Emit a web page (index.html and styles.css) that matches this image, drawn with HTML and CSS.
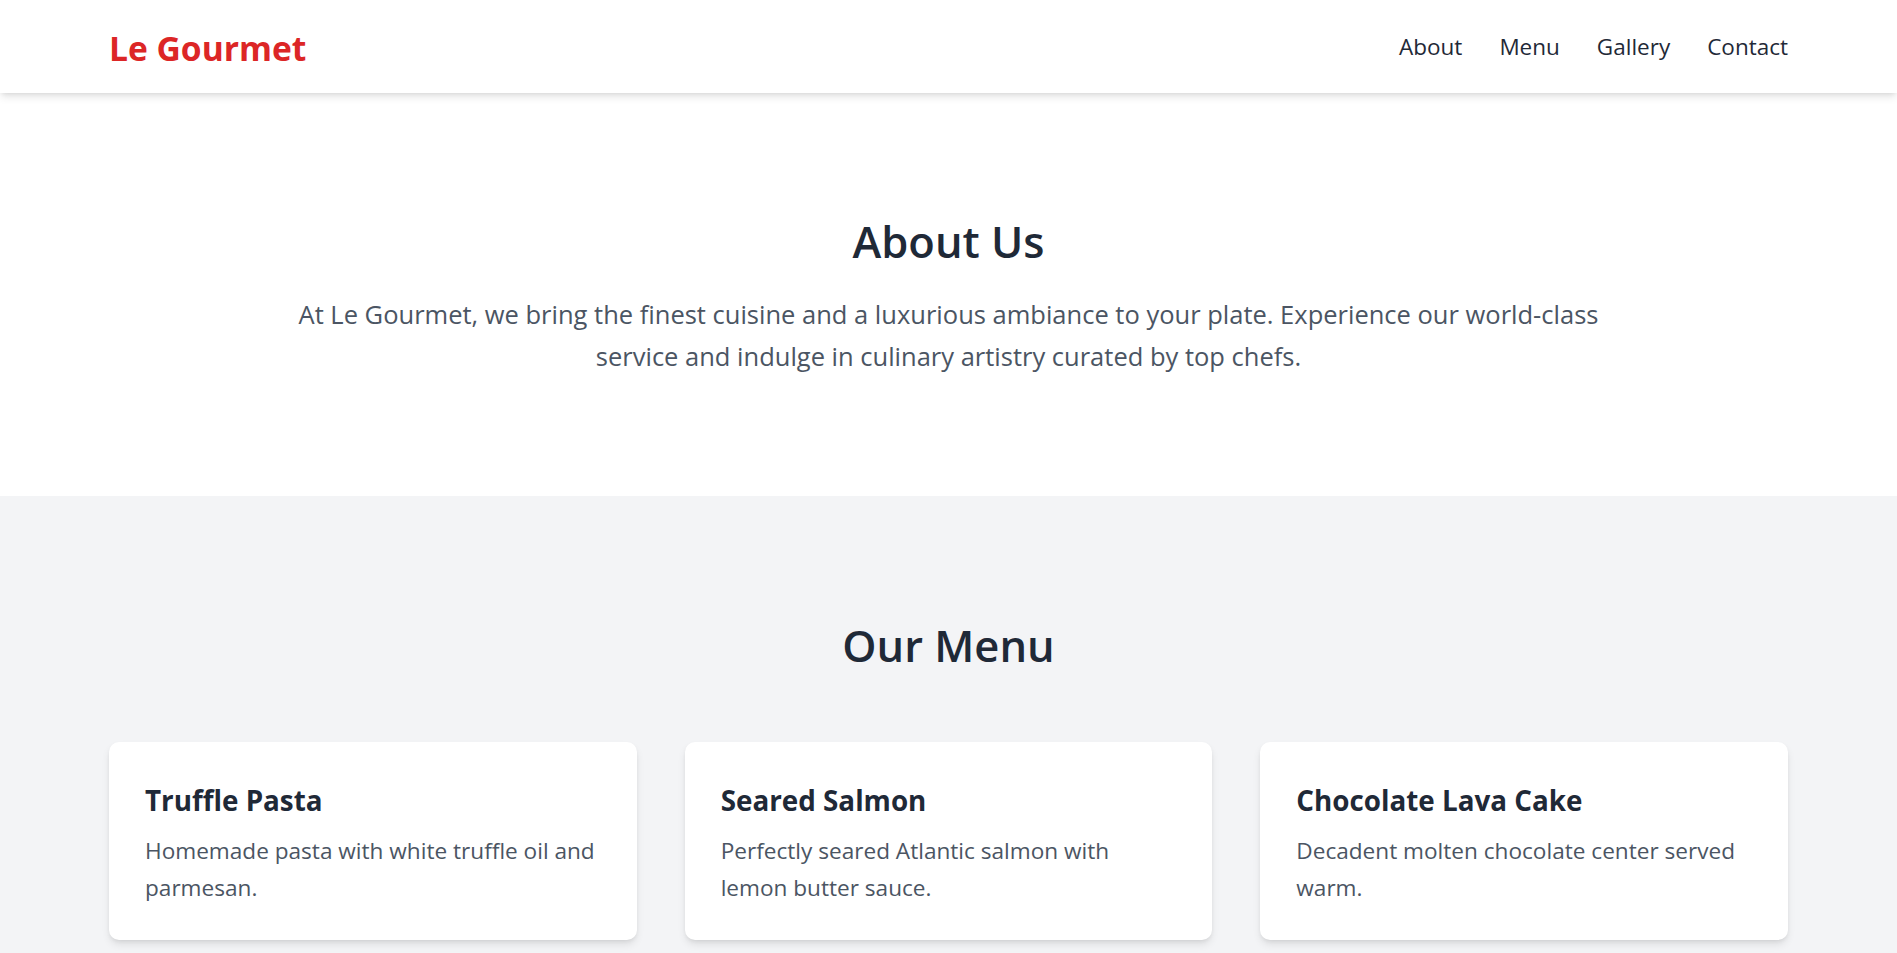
FILE: index.html
```html
<!DOCTYPE html>
<html lang="en">
<head>
<meta charset="utf-8">
<title>Le Gourmet</title>
<link rel="stylesheet" href="styles.css">
</head>
<body>
<header class="site-header">
  <div class="logo">Le Gourmet</div>
  <nav class="nav">
    <a href="#about">About</a>
    <a href="#menu">Menu</a>
    <a href="#gallery">Gallery</a>
    <a href="#contact">Contact</a>
  </nav>
</header>
<section class="about" id="about">
  <h2 class="section-title">About Us</h2>
  <p class="about-text">At Le Gourmet, we bring the finest cuisine and a luxurious ambiance to your plate. Experience our world-class service and indulge in culinary artistry curated by top chefs.</p>
</section>
<section class="menu" id="menu">
  <h2 class="section-title menu-title">Our Menu</h2>
  <div class="cards">
    <div class="card">
      <h3 class="card-title">Truffle Pasta</h3>
      <p class="card-text">Homemade pasta with white truffle oil and parmesan.</p>
    </div>
    <div class="card">
      <h3 class="card-title">Seared Salmon</h3>
      <p class="card-text">Perfectly seared Atlantic salmon with lemon butter sauce.</p>
    </div>
    <div class="card">
      <h3 class="card-title">Chocolate Lava Cake</h3>
      <p class="card-text">Decadent molten chocolate center served warm.</p>
    </div>
  </div>
</section>
</body>
</html>
```
FILE: styles.css
```css
* { box-sizing: border-box; }
html, body { margin: 0; padding: 0; }
body {
  font-family: "Open Sans", "Noto Sans", sans-serif;
  color: #1f2937;
  background: #ffffff;
}
.site-header {
  position: relative;
  z-index: 2;
  height: 93px;
  padding: 0 109px;
  display: flex;
  align-items: center;
  justify-content: space-between;
  background: #ffffff;
  box-shadow: 0 5px 8px -1px rgba(0,0,0,0.10), 0 2px 5px -2px rgba(0,0,0,0.10);
}
.logo {
  font-size: 33.6px;
  font-weight: 700;
  color: #dc2626;
  line-height: 43px;
  padding-top: 4px;
}
.nav {
  display: flex;
  gap: 37px;
}
.nav a {
  font-size: 22.5px;
  color: #1f2937;
  text-decoration: none;
  line-height: 30px;
}
.about {
  padding: 122px 109px 119px;
  text-align: center;
}
.section-title {
  margin: 0 0 25px;
  font-size: 43.5px;
  line-height: 53px;
  font-weight: 600;
  color: #1f2937;
}
.about-text {
  margin: 0 auto;
  max-width: 1340px;
  font-size: 25.5px;
  line-height: 42px;
  color: #4b5563;
}
.menu {
  background: #f3f4f6;
  padding: 123px 109px 116px;
}
.menu-title {
  text-align: center;
  margin-bottom: 70px;
}
.cards {
  display: grid;
  grid-template-columns: repeat(3, 1fr);
  gap: 48px;
}
.card {
  background: #ffffff;
  border-radius: 10px;
  padding: 39px 36px 34px;
  box-shadow: 0 5px 8px -1px rgba(0,0,0,0.10), 0 2px 5px -2px rgba(0,0,0,0.10);
}
.card-title {
  margin: 0 0 13px;
  font-size: 27.8px;
  line-height: 38px;
  font-weight: 700;
  color: #1f2937;
}
.card-text {
  margin: 0;
  font-size: 22.6px;
  line-height: 37px;
  color: #4b5563;
}
```
